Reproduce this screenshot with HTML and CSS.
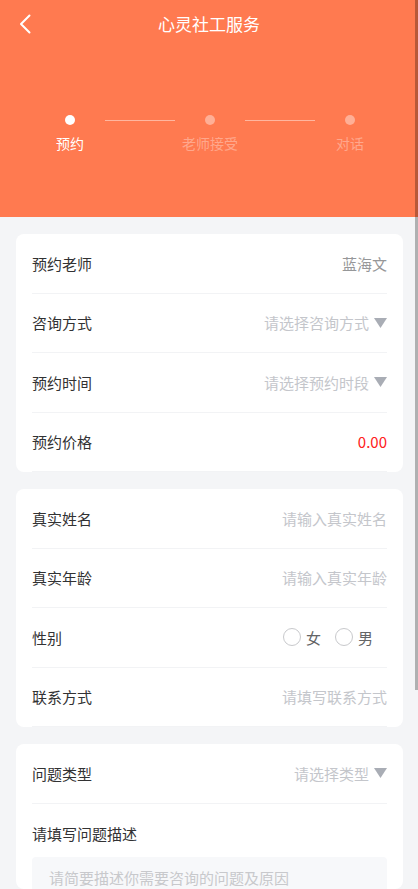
FILE: index.html
```html
<!DOCTYPE html>
<html lang="zh-CN">
  <head>
    <meta charset="UTF-8" />
    <meta name="viewport" content="width=device-width, initial-scale=1.0" />
    <title>心灵社工服务</title>
    <link rel="stylesheet" href="styles.css">
  </head>
  <body>
    <div class="page">
      <!-- top banner with steps -->
      <div class="banner">
        <div class="nav-bar">
          <span class="back">
            <svg width="12" height="20" viewBox="0 0 12 20">
              <path d="M10.5 1.5 L2 10 L10.5 18.5" fill="none" stroke="#fff" stroke-width="2" stroke-linecap="round" stroke-linejoin="round" />
            </svg>
          </span>
          <span class="nav-title">心灵社工服务</span>
          <span></span>
        </div>
        <div class="step-track">
          <span class="dot active"></span>
          <span class="line"></span>
          <span class="dot"></span>
          <span class="line"></span>
          <span class="dot"></span>
        </div>
        <div class="step-labels">
          <span class="step-label active">预约</span>
          <span class="step-label">老师接受</span>
          <span class="step-label">对话</span>
        </div>
      </div>

      <!-- appointment info -->
      <div class="card">
        <div class="row">
          <span class="label">预约老师</span>
          <span class="value">蓝海文</span>
        </div>
        <div class="row">
          <span class="label">咨询方式</span>
          <span class="value placeholder">请选择咨询方式<span class="arrow"><svg width="13" height="10" viewBox="0 0 13 10"><polygon points="0,0 13,0 6.5,10" fill="#a9adb5" /></svg></span></span>
        </div>
        <div class="row">
          <span class="label">预约时间</span>
          <span class="value placeholder">请选择预约时段<span class="arrow"><svg width="13" height="10" viewBox="0 0 13 10"><polygon points="0,0 13,0 6.5,10" fill="#a9adb5" /></svg></span></span>
        </div>
        <div class="row">
          <span class="label">预约价格</span>
          <span class="value price">0.00</span>
        </div>
      </div>

      <!-- personal info -->
      <div class="card">
        <div class="row">
          <span class="label">真实姓名</span>
          <span class="value placeholder">请输入真实姓名</span>
        </div>
        <div class="row">
          <span class="label">真实年龄</span>
          <span class="value placeholder">请输入真实年龄</span>
        </div>
        <div class="row">
          <span class="label">性别</span>
          <span class="radio-group">
            <label class="radio"><span class="circle"></span>女</label>
            <label class="radio"><span class="circle"></span>男</label>
          </span>
        </div>
        <div class="row">
          <span class="label">联系方式</span>
          <span class="value placeholder">请填写联系方式</span>
        </div>
      </div>

      <!-- problem -->
      <div class="card">
        <div class="row">
          <span class="label">问题类型</span>
          <span class="value placeholder">请选择类型<span class="arrow"><svg width="13" height="10" viewBox="0 0 13 10"><polygon points="0,0 13,0 6.5,10" fill="#a9adb5" /></svg></span></span>
        </div>
        <div class="desc-title">请填写问题描述</div>
        <div class="desc-box">请简要描述你需要咨询的问题及原因</div>
      </div>
    </div>
    <div class="scroll-thumb"></div>
  </body>
</html>
```

FILE: styles.css
```css
* {
  box-sizing: border-box;
  font-family: "Noto Sans CJK SC", "Noto Sans", sans-serif;
}
html,
body {
  margin: 0;
  width: 418px;
  height: 889px;
  overflow: hidden;
}
body {
  background-color: #f4f5f7;
  position: relative;
}
.banner {
  height: 217px;
  background-color: #ff7a50;
  color: #fff;
}
.nav-bar {
  height: 48px;
  display: grid;
  grid-template-columns: 60px 1fr 60px;
  align-items: center;
}
.back {
  padding-left: 19px;
  display: flex;
  align-items: center;
  margin-top: -1px;
}
.nav-title {
  text-align: center;
  font-size: 17px;
  line-height: 24px;
}
.step-track {
  display: flex;
  align-items: center;
  padding-left: 65px;
  margin-top: 67px;
  height: 10px;
}
.dot {
  width: 10px;
  height: 10px;
  border-radius: 50%;
  background-color: rgba(255, 255, 255, 0.4);
}
.dot.active {
  background-color: #fff;
}
.line {
  width: 70px;
  height: 1px;
  margin: 0 30px;
  background-color: rgba(255, 255, 255, 0.45);
}
.step-labels {
  display: grid;
  grid-template-columns: 140px 140px 140px;
  margin-top: 8px;
}
.step-label {
  text-align: center;
  font-size: 14px;
  line-height: 20px;
  color: rgba(255, 255, 255, 0.35);
}
.step-label.active {
  color: #fff;
}
.card {
  margin: 17px 15px 0 16px;
  background-color: #fff;
  border-radius: 8px;
  padding: 0 16px;
}
.row {
  height: 59.5px;
  display: flex;
  align-items: center;
  justify-content: space-between;
  border-bottom: 1px solid #f2f3f5;
}
.label {
  font-size: 15px;
  color: #323233;
}
.value {
  font-size: 15px;
  color: #969799;
  display: flex;
  align-items: center;
}
.placeholder {
  color: #c4c6cb;
}
.price {
  color: #ff2020;
}
.arrow {
  margin-left: 5px;
  display: flex;
}
.radio-group {
  display: flex;
  align-items: center;
  gap: 14px;
  margin-right: 14px;
}
.radio {
  display: flex;
  align-items: center;
  gap: 5px;
  font-size: 15px;
  color: #646566;
}
.circle {
  width: 18px;
  height: 18px;
  border: 1px solid #c8c9cc;
  border-radius: 50%;
}
.desc-title {
  padding-top: 19px;
  font-size: 15px;
  line-height: 21px;
  color: #323233;
}
.desc-box {
  margin-top: 13.5px;
  height: 32px;
  background-color: #f7f8fa;
  border-radius: 4px 4px 0 0;
  padding: 10px 17px 0;
  font-size: 15px;
  line-height: 21px;
  color: #c8c9cc;
}
.scroll-thumb {
  position: absolute;
  top: 0;
  right: 0;
  width: 3px;
  height: 690px;
  background-color: rgba(0, 0, 0, 0.28);
}
```
